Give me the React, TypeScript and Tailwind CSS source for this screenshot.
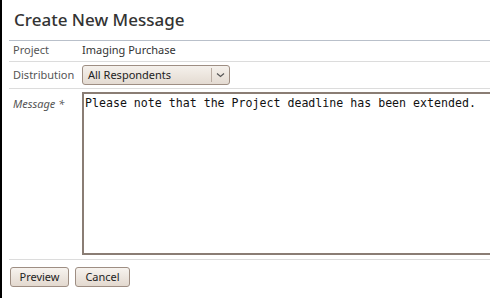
import React, { useState } from 'react';

const labelFont = { fontFamily: '"Noto Sans", "Open Sans", sans-serif' };

export default function App() {
    const [message, setMessage] = useState('Please note that the Project deadline has been extended.');
    const [distribution, setDistribution] = useState('All Respondents');

    return (
        <div className="w-[490px] h-[298px] bg-white flex overflow-hidden" style={labelFont}>
            <div className="w-[2px] shrink-0 bg-black" />
            <div className="flex-1 pl-[7px] flex flex-col min-w-0">
                <h1 className="pl-[5px] pt-[9px] h-[41px] text-[17px] leading-[22px] font-medium text-[#333] border-b border-[#b9c0ca]">
                    Create New Message
                </h1>

                <div className="flex items-center h-[21px] border-b border-[#dcdcdc] text-[11px] pb-[1px]">
                    <span className="w-[73px] shrink-0 pl-[4px] text-[#555]">Project</span>
                    <span className="text-[#333]">Imaging Purchase</span>
                </div>

                <div className="flex items-center h-[27px] border-b border-[#dcdcdc] text-[11px]">
                    <span className="w-[73px] shrink-0 pl-[4px] text-[#555]">Distribution</span>
                    <div className="relative w-[148px] h-[20px] rounded-[3px] border border-[#9e8e83] bg-gradient-to-b from-[#f5f1ec] to-[#e4dbd2] flex items-center">
                        <span className="pl-[5px] text-[#222]">{distribution}</span>
                        <div className="absolute right-0 top-[2px] bottom-[2px] w-[18px] border-l border-[#b9aca2] flex items-center justify-center">
                            <svg width="9" height="6" viewBox="0 0 9 6" fill="none">
                                <path d="M1 1.5 L4.5 4.5 L8 1.5" stroke="#555" strokeWidth="1.2" />
                            </svg>
                        </div>
                        <select
                            value={distribution}
                            onChange={(e) => setDistribution(e.target.value)}
                            className="absolute inset-0 opacity-0 cursor-pointer"
                        >
                            <option>All Respondents</option>
                            <option>Selected Respondents</option>
                        </select>
                    </div>
                </div>

                <div className="flex pt-[3px] h-[171px] border-b border-[#dcdcdc]">
                    <span className="w-[73px] shrink-0 pl-[4px] pt-[4px] text-[11px] text-[#555] italic">Message *</span>
                    <textarea
                        value={message}
                        onChange={(e) => setMessage(e.target.value)}
                        className="w-[500px] h-[163px] shrink-0 resize-none border-2 border-[#8a7d74] px-[1px] pt-[2px] text-[11.6px] leading-[14px] text-[#111] outline-none"
                        style={{ fontFamily: '"DejaVu Sans Mono", monospace' }}
                    />
                </div>

                <div className="flex gap-[6px] pt-[7px] pl-[1px]">
                    <button className="w-[59px] h-[20px] rounded-[3px] border border-[#9e8e83] bg-gradient-to-b from-[#f7f3ef] to-[#e3d9cf] text-[11px] text-[#222]">
                        Preview
                    </button>
                    <button className="w-[55px] h-[20px] rounded-[3px] border border-[#9e8e83] bg-gradient-to-b from-[#f7f3ef] to-[#e3d9cf] text-[11px] text-[#222]">
                        Cancel
                    </button>
                </div>
            </div>
        </div>
    );
}
